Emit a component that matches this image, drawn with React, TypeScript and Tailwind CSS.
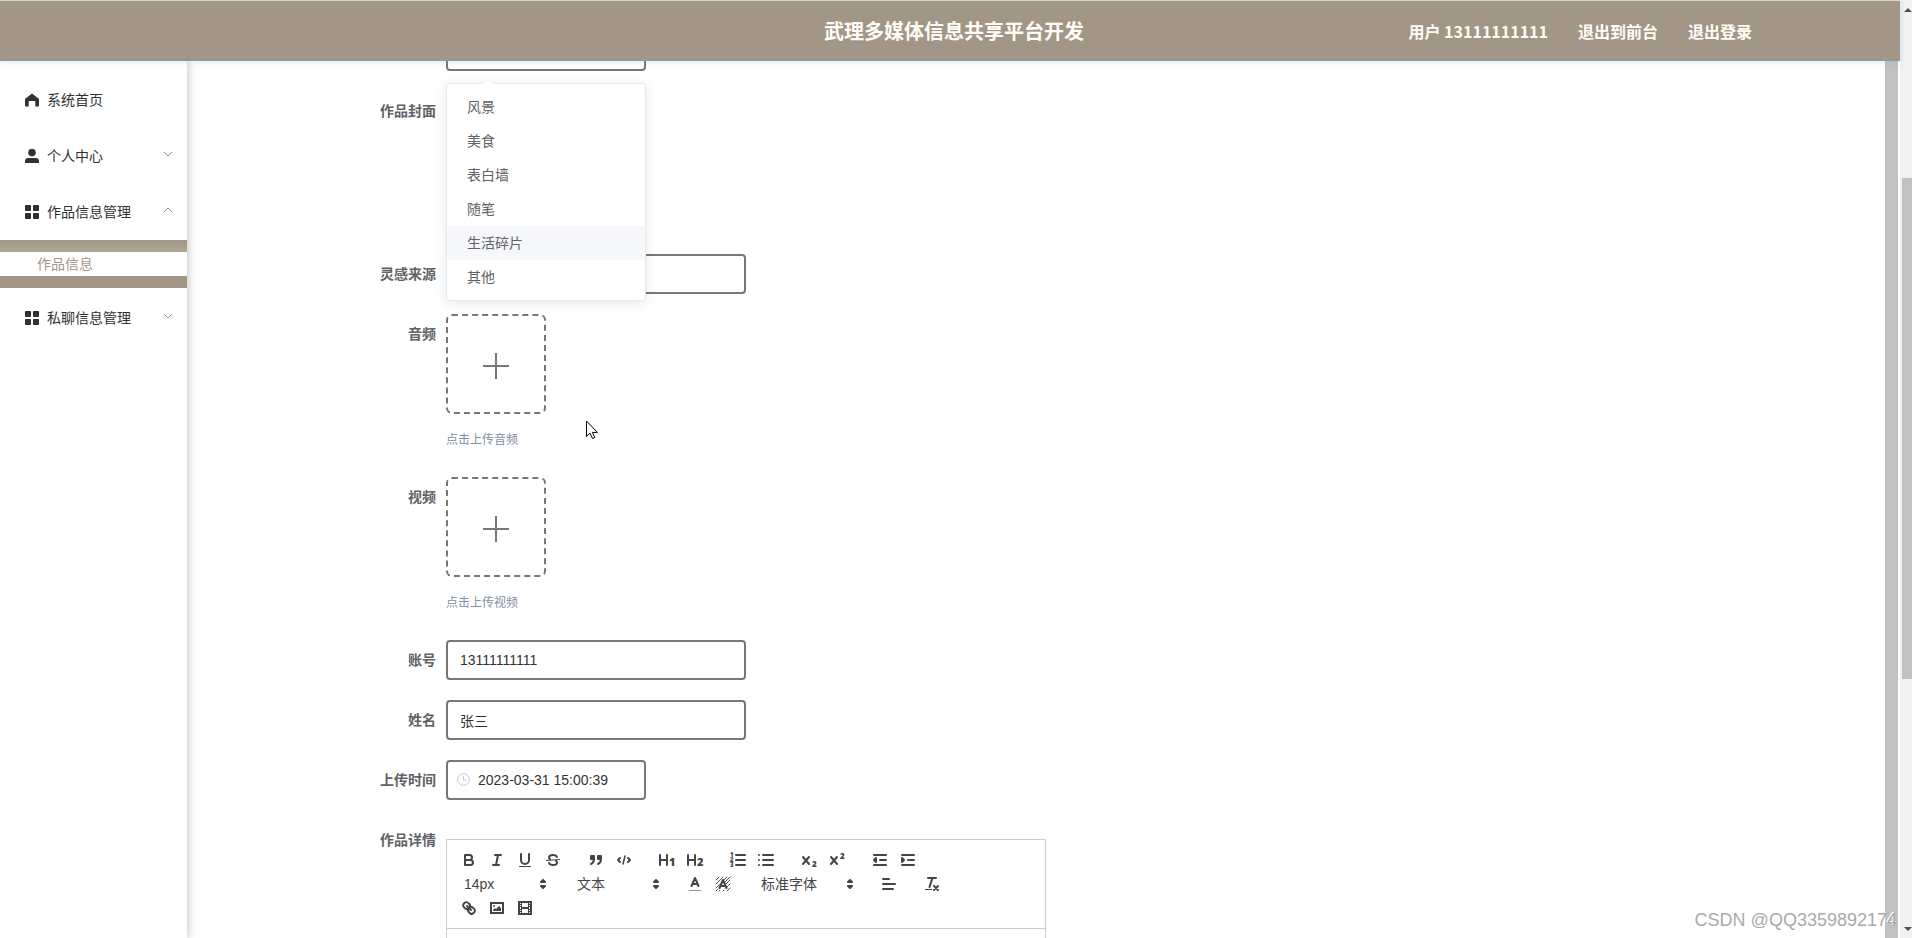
import clsx from 'clsx';
import { ReactNode, useState } from 'react';

const categories = ['风景', '美食', '表白墙', '随笔', '生活碎片', '其他'];

const inputStyle =
    'h-10 rounded border-2 border-[#777] bg-white text-sm text-[#333] outline-none';

/* ---------- sidebar icons ---------- */

function HomeIcon() {
    return (
        <svg viewBox="0 0 14 14" className="size-[14px]" fill="#303133">
            <path d="M7 .5 0 6v6.600c0 .5.4.9.9.9h2.800V9c0-.6.4-1 1-1h4.600c.6 0 1 .4 1 1v4.500h2.800c.5 0 .9-.4.9-.9V6z" />
        </svg>
    );
}

function UserIcon() {
    return (
        <svg viewBox="0 0 14 14" className="size-[14px]" fill="#303133">
            <circle cx="7" cy="3.6" r="3.8" />
            <path d="M0 14v-2.400C0 9.800 1.700 9 3.400 9h7.200c1.700 0 3.400.8 3.400 2.600V14z" />
        </svg>
    );
}

function GridIcon() {
    return (
        <svg viewBox="0 0 14 14" className="size-[14px]" fill="#303133">
            <rect x="0" y="0" width="6" height="6" rx=".8" />
            <rect x="8" y="0" width="6" height="6" rx=".8" />
            <rect x="0" y="8" width="6" height="6" rx=".8" />
            <rect x="8" y="8" width="6" height="6" rx=".8" />
        </svg>
    );
}

function Chevron({ up }: { up?: boolean }) {
    return (
        <svg
            viewBox="0 0 10 6"
            className="mb-1 ml-auto h-[6px] w-[10px]"
            fill="none"
            stroke="#909399"
        >
            <path d={up ? 'M1 5 5 1l4 4' : 'M1 1l4 4 4-4'} />
        </svg>
    );
}

function MenuItem({
    icon,
    text,
    arrow,
}: {
    icon: ReactNode;
    text: string;
    arrow?: 'up' | 'down';
}) {
    return (
        <button className="flex h-14 w-full items-center gap-2 pr-[14px] pl-[25px] text-sm text-[#303133]">
            {icon}
            <span>{text}</span>
            {arrow && <Chevron up={arrow === 'up'} />}
        </button>
    );
}

/* ---------- editor toolbar ---------- */

function Tool({ name, children }: { name: string; children: ReactNode }) {
    return (
        <button
            type="button"
            aria-label={name}
            className="flex h-6 w-7 items-center justify-center"
        >
            <svg
                viewBox="0 0 18 18"
                className="size-[18px]"
                fill="none"
                stroke="#444"
                strokeWidth="2"
                strokeLinecap="round"
                strokeLinejoin="round"
            >
                {children}
            </svg>
        </button>
    );
}

function Digit({ x, y, size, n }: { x: number; y: number; size: number; n: number }) {
    return (
        <text
            x={x}
            y={y}
            fontSize={size}
            fontWeight="800"
            fontFamily="Open Sans, sans-serif"
            fill="#444"
            stroke="none"
        >
            {n}
        </text>
    );
}

function Group({ children }: { children: ReactNode }) {
    return <div className="mr-[15px] flex">{children}</div>;
}

function Picker({ text, wide }: { text: string; wide?: boolean }) {
    return (
        <button
            type="button"
            className={clsx(
                'flex h-6 items-center justify-between pr-[1px] pl-[9px] text-sm text-[#444]',
                wide ? 'w-[108px]' : 'w-[98px]'
            )}
        >
            {text}
            <svg
                viewBox="0 0 18 18"
                className="size-[18px]"
                fill="#444"
                stroke="#444"
                strokeWidth="2"
                strokeLinejoin="round"
            >
                <polygon points="7 11 9 13 11 11" />
                <polygon points="7 7 9 5 11 7" />
            </svg>
        </button>
    );
}

function Toolbar() {
    return (
        <div className="flex flex-wrap border-b border-[#ccc] p-2">
            <Group>
                <Tool name="bold">
                    <path d="M5 4h4.500a2.500 2.500 0 0 1 0 5H5zM5 9h5.500a2.500 2.500 0 0 1 0 5H5z" />
                </Tool>
                <Tool name="italic">
                    <path d="M7 4h6M5 14h6M8 14l2-10" />
                </Tool>
                <Tool name="underline">
                    <path d="M5 3v6a4 4 0 0 0 8 0V3" />
                    <path d="M3.500 15.500h11" strokeWidth="1" />
                </Tool>
                <Tool name="strike">
                    <path d="M15.500 8.500l-13 1" strokeWidth="1" />
                    <path d="M12.900 6C12.500 4.800 10.900 4 9 4 6.800 4 5 5.100 5 6.500 5 7.300 5.300 7.800 6 8.200M5.100 12C5.500 13.200 7.100 14 9 14c2.200 0 4-1.100 4-2.500 0-.8-.3-1.300-1-1.700" />
                </Tool>
            </Group>
            <Group>
                <Tool name="blockquote">
                    <rect x="4" y="5" width="3" height="3" fill="#444" />
                    <rect x="11" y="5" width="3" height="3" fill="#444" />
                    <path d="M7 8c0 4-3 5-3 5M14 8c0 4-3 5-3 5" fill="#444" />
                </Tool>
                <Tool name="code">
                    <path d="M5 7 3 9l2 2M13 7l2 2-2 2" />
                    <path d="M10 5 8 13" strokeWidth="1.500" />
                </Tool>
            </Group>
            <Group>
                <Tool name="header 1">
                    <path d="M2 4v10M9 4v10M2 9h7" />
                    <Digit x={11} y={15} size={11} n={1} />
                </Tool>
                <Tool name="header 2">
                    <path d="M2 4v10M9 4v10M2 9h7" />
                    <Digit x={11} y={15} size={11} n={2} />
                </Tool>
            </Group>
            <Group>
                <Tool name="ordered list">
                    <path d="M7 4h9M7 9h9M7 14h9" />
                    <Digit x={1} y={6} size={6} n={1} />
                    <Digit x={1} y={11} size={6} n={2} />
                    <Digit x={1} y={16} size={6} n={3} />
                </Tool>
                <Tool name="bullet list">
                    <path d="M6 4h10M6 9h10M6 14h10M2 4h0M2 9h0M2 14h0" />
                </Tool>
            </Group>
            <Group>
                <Tool name="subscript">
                    <path d="M3 6l6 7M9 6l-6 7" />
                    <Digit x={12} y={16} size={8} n={2} />
                </Tool>
                <Tool name="superscript">
                    <path d="M3 6l6 7M9 6l-6 7" />
                    <Digit x={12} y={8} size={8} n={2} />
                </Tool>
            </Group>
            <Group>
                <Tool name="outdent">
                    <path d="M3 14h12M3 4h12M9 9h6" />
                    <path d="M5 7v4L3 9z" fill="#444" />
                </Tool>
                <Tool name="indent">
                    <path d="M3 14h12M3 4h12M9 9h6" />
                    <path d="M3 7v4l2-2z" fill="#444" />
                </Tool>
            </Group>
            <Group>
                <Picker text="14px" />
            </Group>
            <Group>
                <Picker text="文本" />
            </Group>
            <Group>
                <Tool name="color">
                    <path d="M5.500 11 9 3l3.500 8M6.400 9h5.200" />
                    <path d="M3 15.500h12" stroke="#999" strokeWidth="1" />
                </Tool>
                <Tool name="background">
                    <path
                        d="M2 5l3-3M2 9l7-7M2 13 13 2M2 16 16 2M5 16 16 5M9 16l7-7M13 16l3-3"
                        strokeWidth="1"
                        stroke="#555"
                    />
                    <path d="M5 14l4-9 4 9z" fill="#fff" stroke="#fff" />
                    <path d="M5.500 13 9 5l3.500 8M6.400 11h5.200" />
                </Tool>
            </Group>
            <Group>
                <Picker text="标准字体" wide />
            </Group>
            <Group>
                <Tool name="align">
                    <path d="M3 4h6M3 9h12M3 14h10" />
                </Tool>
            </Group>
            <Group>
                <Tool name="clean">
                    <path d="M5 3h8M6.500 12 9.500 3M11 11l4 4M15 11l-4 4" />
                    <path d="M2.500 14.500h6" strokeWidth="1" />
                </Tool>
            </Group>
            <Group>
                <Tool name="link">
                    <path d="M7 7l4 4" />
                    <path d="M8.900 4.577a3.476 3.476 0 0 1 .36 4.679A3.476 3.476 0 0 1 4.577 8.900C3.185 7.500 2.035 6.400 4.217 4.217S7.500 3.185 8.900 4.577Z" />
                    <path d="M13.423 9.100a3.476 3.476 0 0 0-4.679-.36 3.476 3.476 0 0 0 .36 4.679c1.392 1.392 2.500 2.542 4.679.36S14.815 10.500 13.423 9.100Z" />
                </Tool>
                <Tool name="image">
                    <rect x="3" y="4" width="12" height="10" strokeLinejoin="miter" />
                    <g fill="#444" stroke="none">
                        <circle cx="6" cy="7" r="1" />
                        <path d="M5 12v-1l2-2 1 1 3-3 2 2v3z" />
                    </g>
                </Tool>
                <Tool name="video">
                    <rect x="3" y="3" width="12" height="12" strokeLinejoin="miter" />
                    <g fill="#444" stroke="none">
                        <path d="M5 3h1v12H5zM12 3h1v12h-1zM5 8h8v2H5z" />
                        <path d="M3 5h3v1H3zM3 7h3v1H3zM3 10h3v1H3zM3 12h3v1H3zM12 5h3v1h-3zM12 7h3v1h-3zM12 10h3v1h-3zM12 12h3v1h-3z" />
                    </g>
                </Tool>
            </Group>
        </div>
    );
}

/* ---------- form ---------- */

function Field({
    id,
    label,
    className,
    children,
}: {
    id: string;
    label: string;
    className?: string;
    children?: ReactNode;
}) {
    return (
        <div className={clsx('flex', className)}>
            <label
                htmlFor={id}
                className="w-[120px] shrink-0 pr-[10px] text-right text-sm leading-10 font-bold text-[#606266]"
            >
                {label}
            </label>
            {children}
        </div>
    );
}

function Upload({ id, tip }: { id: string; tip: string }) {
    return (
        <div>
            <button
                id={id}
                type="button"
                className="flex size-[100px] items-center justify-center rounded-md border-2 border-dashed border-[#777] pt-1"
            >
                <svg viewBox="0 0 26 26" className="size-[26px]" stroke="#777" strokeWidth="2">
                    <path d="M13 0v26M0 13h26" />
                </svg>
            </button>
            <p className="mt-4 text-xs leading-5 text-[#838fa1]">{tip}</p>
        </div>
    );
}

function ScrollBar() {
    return (
        <div className="flex w-3 shrink-0 flex-col bg-[#f1f1f1] pl-[2px]">
            <svg viewBox="0 0 10 16" className="h-4 w-[10px]" fill="#505050">
                <path d="M2 12l4-4 4 4z" />
            </svg>
            <div className="flex grow flex-col">
                <div className="grow-[162]" />
                <div className="grow-[501] bg-[#c1c1c1]" />
                <div className="grow-[243]" />
            </div>
            <svg viewBox="0 0 10 16" className="h-4 w-[10px]" fill="#505050">
                <path d="M2 5l4 4 4-4z" />
            </svg>
        </div>
    );
}

export default function App() {
    const [category, setCategory] = useState<string>('');
    const [hovered, setHovered] = useState<string>('生活碎片');
    const [account, setAccount] = useState<string>('13111111111');
    const [name, setName] = useState<string>('张三');
    const [time, setTime] = useState<string>('2023-03-31 15:00:39');

    return (
        <div className="relative flex h-screen overflow-hidden bg-white font-['Liberation_Sans','Noto_Sans_CJK_SC',sans-serif]">
            <div className="flex min-w-0 grow flex-col">
                <header className="z-20 grid h-[61px] shrink-0 grid-cols-[1fr_auto_1fr] items-center border-t border-[#d9d3c0] bg-[#a29786] pl-2 font-['Noto_Sans_CJK_SC',sans-serif] font-bold text-[#fffdf5] shadow-[0_1px_6px_rgba(64,158,255,0.25)]">
                    <span />
                    <h1 className="text-xl">武理多媒体信息共享平台开发</h1>
                    <nav className="flex justify-end gap-[30px] pr-[148px] text-base">
                        <span>用户 13111111111</span>
                        <a href="#front">退出到前台</a>
                        <a href="#logout">退出登录</a>
                    </nav>
                </header>

                <div className="flex min-h-0 grow">
                    <aside className="z-10 w-[187px] shrink-0 bg-white pt-[11px] shadow-[1px_0_8px_rgba(0,0,0,0.25)]">
                        <MenuItem icon={<HomeIcon />} text="系统首页" />
                        <MenuItem icon={<UserIcon />} text="个人中心" arrow="down" />
                        <MenuItem icon={<GridIcon />} text="作品信息管理" arrow="up" />
                        <div className="mb-[2px] bg-linear-to-b from-[#a29786] from-0% via-[#b0a896] via-25% to-[#a29786] to-50% py-3">
                            <a
                                href="#works"
                                className="block h-6 bg-white pl-[37px] text-sm leading-6 text-[#a29786]"
                            >
                                作品信息
                            </a>
                        </div>
                        <MenuItem icon={<GridIcon />} text="私聊信息管理" arrow="down" />
                    </aside>

                    <main className="min-w-0 grow overflow-hidden pl-[139px]">
                        <form className="-mt-[30px] flex flex-col gap-5">
                            <div className="relative ml-[120px] w-[200px]">
                                <select
                                    aria-label="作品类型"
                                    value={category}
                                    onChange={(e) => setCategory(e.target.value)}
                                    className={clsx(inputStyle, 'block w-full appearance-none px-3')}
                                >
                                    <option value=""></option>
                                    {categories.map((item) => (
                                        <option key={item}>{item}</option>
                                    ))}
                                </select>
                                <div className="absolute top-full left-0 z-10 mt-3 w-full rounded border border-[#e4e7ed] bg-white py-[6px] shadow-[0_2px_12px_rgba(0,0,0,0.1)]">
                                    <svg
                                        viewBox="0 0 12 7"
                                        className="absolute -top-[6px] left-[35px] h-[7px] w-3"
                                        fill="#fff"
                                        stroke="#ebeef5"
                                    >
                                        <path d="M0 6.500 6 .5l6 6" />
                                    </svg>
                                    <ul>
                                        {categories.map((item) => (
                                            <li
                                                key={item}
                                                onMouseEnter={() => setHovered(item)}
                                                onClick={() => setCategory(item)}
                                                className={clsx(
                                                    'h-[34px] px-5 text-sm leading-[34px] text-[#606266]',
                                                    { 'bg-[#f5f7fa]': hovered === item }
                                                )}
                                            >
                                                {item}
                                            </li>
                                        ))}
                                    </ul>
                                </div>
                            </div>
                            <Field id="cover" label="作品封面" className="h-[143px]" />
                            <Field id="source" label="灵感来源">
                                <input id="source" className={clsx(inputStyle, 'w-[300px] px-3')} />
                            </Field>
                            <Field id="audio" label="音频" className="h-[143px]">
                                <Upload id="audio" tip="点击上传音频" />
                            </Field>
                            <Field id="video" label="视频" className="h-[143px]">
                                <Upload id="video" tip="点击上传视频" />
                            </Field>
                            <Field id="account" label="账号">
                                <input
                                    id="account"
                                    value={account}
                                    onChange={(e) => setAccount(e.target.value)}
                                    className={clsx(inputStyle, 'w-[300px] px-3')}
                                />
                            </Field>
                            <Field id="name" label="姓名">
                                <input
                                    id="name"
                                    value={name}
                                    onChange={(e) => setName(e.target.value)}
                                    className={clsx(inputStyle, 'w-[300px] px-3')}
                                />
                            </Field>
                            <Field id="time" label="上传时间">
                                <div className={clsx(inputStyle, 'flex w-[200px] items-center gap-2 pl-[9px]')}>
                                    <svg
                                        viewBox="0 0 14 14"
                                        className="mb-[2px] size-[13px] shrink-0"
                                        fill="none"
                                        stroke="#c0c4cc"
                                    >
                                        <circle cx="7" cy="7" r="6.300" />
                                        <path d="M7 3v4.500h3.500" />
                                    </svg>
                                    <input
                                        id="time"
                                        value={time}
                                        onChange={(e) => setTime(e.target.value)}
                                        className="w-full min-w-0 outline-none"
                                    />
                                </div>
                            </Field>
                            <Field id="detail" label="作品详情">
                                <div className="mt-[19px] w-[600px] border border-[#ccc]">
                                    <Toolbar />
                                    <textarea
                                        id="detail"
                                        className="block h-[300px] w-full resize-none p-3 text-sm outline-none"
                                    />
                                </div>
                            </Field>
                        </form>
                    </main>
                    <div className="mr-[2px] w-[13px] shrink-0 bg-[#c1c1c1]" />
                </div>
            </div>
            <ScrollBar />

            {/* mouse pointer */}
            <svg
                viewBox="0 0 12 19"
                className="absolute top-[420px] left-[586px] z-30 h-[19px] w-3"
                fill="#fff"
                stroke="#000"
            >
                <path d="M.5 1v15.500L4 13.200l2.500 5.300 2.300-1-2.400-5.100h5z" />
            </svg>
            <p className="absolute right-[15px] bottom-[6px] z-30 text-lg leading-6 text-[#aaa] [text-shadow:-1px_-1px_0_#fff]">
                CSDN @QQ3359892174
            </p>
        </div>
    );
}
